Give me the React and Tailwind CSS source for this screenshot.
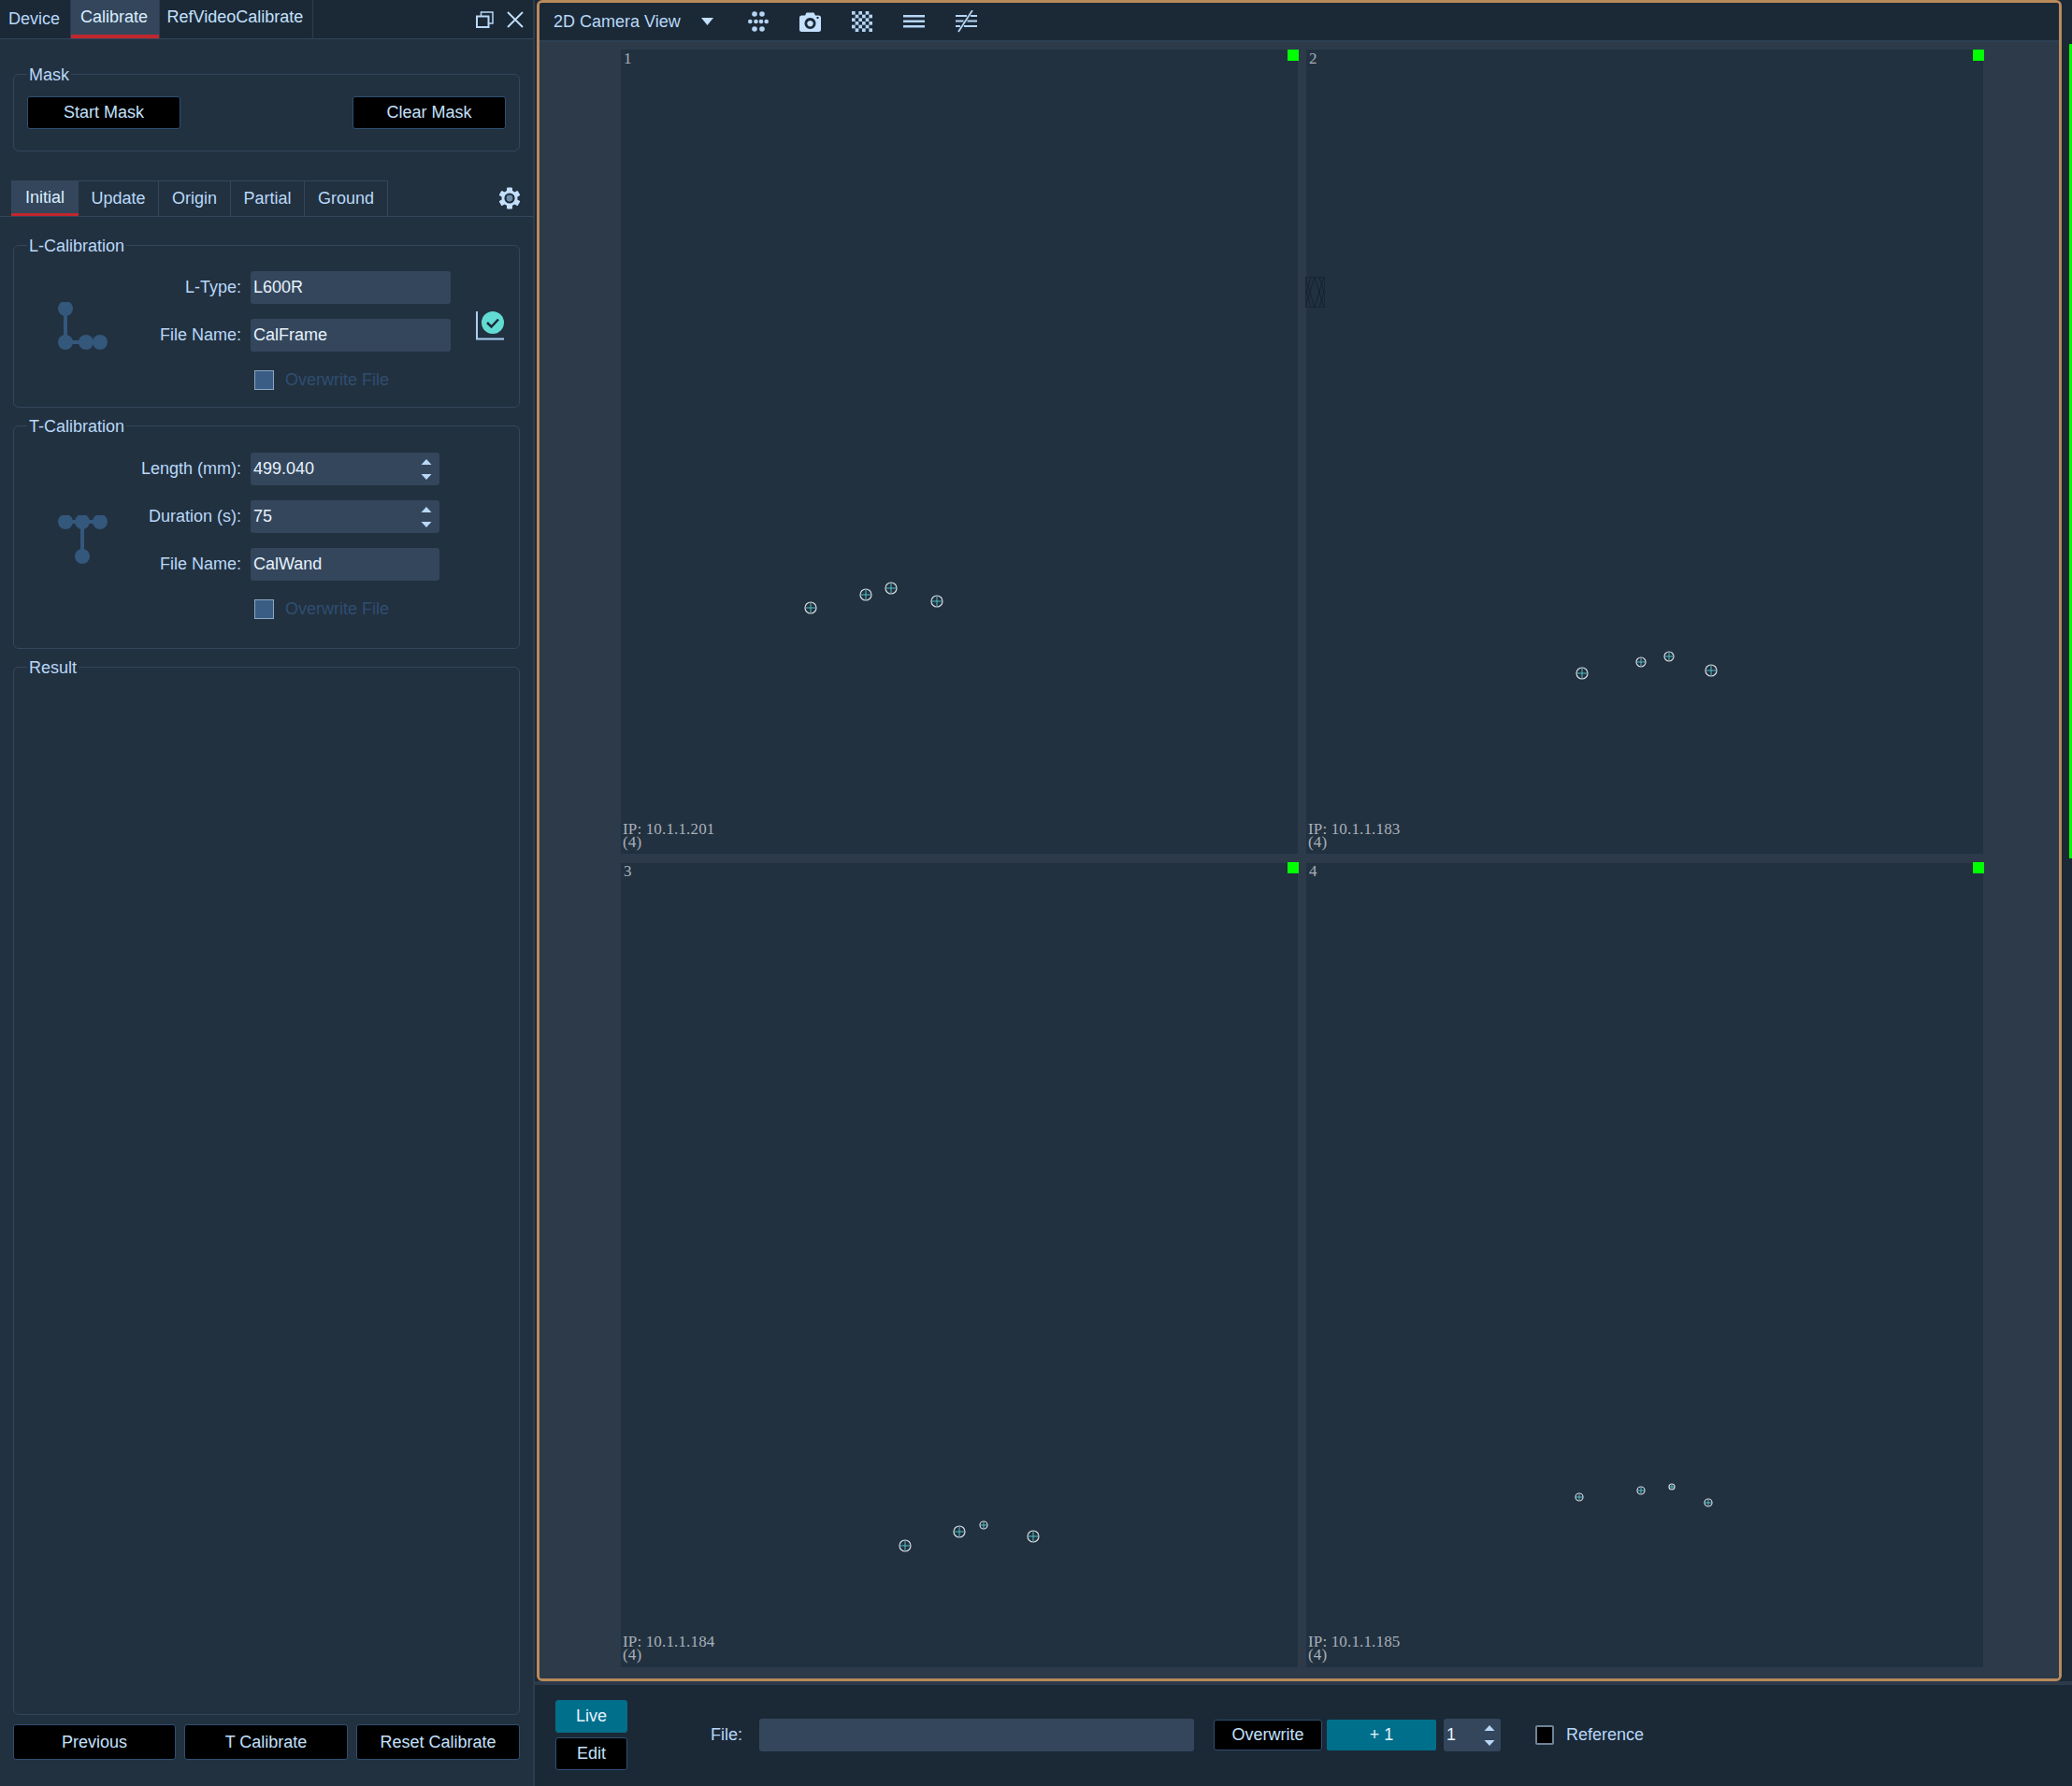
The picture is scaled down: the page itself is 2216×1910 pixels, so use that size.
import React from "react";

const FONT = { fontFamily: '"Liberation Sans", Arial, sans-serif' };

const cells = [
  { id: "1", ip: "10.1.1.201", marks: [[203, 597, 6], [262, 583, 6], [289, 576, 6], [338, 590, 6]] },
  { id: "2", ip: "10.1.1.183", marks: [[295, 667, 6], [358, 655, 5], [388, 649, 5], [433, 664, 6]] },
  { id: "3", ip: "10.1.1.184", marks: [[304, 730, 6], [362, 715, 6], [388, 708, 4], [441, 720, 6]] },
  { id: "4", ip: "10.1.1.185", marks: [[292, 678, 4], [358, 671, 4], [391, 667, 3], [430, 684, 4]] },
];

const Spinner = () => (
  <svg width="12" height="22" viewBox="0 0 12 22" className="text-[#b9d8f8]">
    <path d="M6 0L11.500 6H0.500Z" fill="currentColor" />
    <path d="M6 22L11.500 16H0.500Z" fill="currentColor" />
  </svg>
);

const Btn = ({ children, className }) => (
  <button className={`flex items-center justify-center bg-black border border-[#2f4f72] rounded-[3px] text-[18px] text-[#c4e0fc] ${className}`}>
    {children}
  </button>
);

const Group = ({ title, className, children }) => (
  <div className={`relative border border-[#33465a] rounded-[6px] ${className}`}>
    <span className="absolute left-[14px] top-[-11px] h-[22px] px-[2px] leading-[22px] bg-[#223140] text-[18px] text-[#b9d8f8]">
      {title}
    </span>
    {children}
  </div>
);

const Field = ({ label, value, width, spin }) => (
  <div className="flex items-center h-[35px]">
    <span className="w-[113px] text-right text-[18px] text-[#b9d8f8] whitespace-nowrap">{label}</span>
    <div className={`ml-[10px] h-[35px] ${width} flex items-center justify-between pl-[3px] pr-[8px] bg-[#34465b] rounded-[3px] text-[18px] text-[#e6f2fd]`}>
      {value}
      {spin && <Spinner />}
    </div>
  </div>
);

const Overwrite = ({ className }) => (
  <div className={`flex items-center h-[21px] ml-[127px] ${className}`}>
    <div className="w-[21px] h-[21px] bg-[#3a5d85] border border-[#8ba7c5]"></div>
    <span className="ml-[12px] text-[18px] text-[#2f4e70]">Overwrite File</span>
  </div>
);

const LIcon = () => (
  <svg width="53" height="52" viewBox="62 323 53 52" className="text-[#34577c]">
    <path d="M70 330V366H107" fill="none" stroke="currentColor" strokeWidth="4" />
    <circle cx="70" cy="330" r="8" fill="currentColor" />
    <circle cx="70" cy="366" r="8" fill="currentColor" />
    <circle cx="92" cy="366" r="8" fill="currentColor" />
    <circle cx="107" cy="366" r="8" fill="currentColor" />
  </svg>
);

const TIcon = () => (
  <svg width="53" height="52" viewBox="62 551 53 52" className="text-[#34577c]">
    <path d="M70 558H107M88 558V595" fill="none" stroke="currentColor" strokeWidth="4" />
    <circle cx="70" cy="558" r="8" fill="currentColor" />
    <circle cx="88" cy="558" r="8" fill="currentColor" />
    <circle cx="107" cy="558" r="8" fill="currentColor" />
    <circle cx="88" cy="595" r="8" fill="currentColor" />
  </svg>
);

const ChartCheck = () => (
  <svg width="31" height="31" viewBox="0 0 31 31">
    <path d="M1 0V29.500H30" fill="none" stroke="#a9d0f5" strokeWidth="2" />
    <circle cx="18" cy="12" r="12" fill="#62dcd3" />
    <path d="M12 12L16.500 16.500L24 8.500" fill="none" stroke="#1b2937" strokeWidth="2.500" />
  </svg>
);

const GearIcon = () => (
  <svg width="24" height="24" viewBox="0 0 24 24" className="ml-auto mt-[7px]">
    <g fill="#c4e0fc">
      <circle cx="12" cy="12" r="8.500" />
      {[0, 60, 120, 180, 240, 300].map((deg) => (
        <rect key={deg} x="9" y="0.500" width="6" height="5" rx="1" transform={`rotate(${deg} 12 12)`} />
      ))}
    </g>
    <circle cx="12" cy="12" r="4.500" fill="#6e8aa8" stroke="#1f2d3b" strokeWidth="2.200" />
  </svg>
);

const DotsIcon = () => (
  <svg width="22" height="22" viewBox="0 0 22 22" fill="#b5d5f5">
    <circle cx="7" cy="3" r="2.800" />
    <circle cx="15" cy="3" r="2.800" />
    <circle cx="2.300" cy="11" r="2.300" />
    <circle cx="8.500" cy="11" r="2.300" />
    <circle cx="14" cy="11" r="2.300" />
    <circle cx="19.700" cy="11" r="2.300" />
    <circle cx="7" cy="19" r="2.800" />
    <circle cx="15" cy="19" r="2.800" />
  </svg>
);

const CameraIcon = () => (
  <svg width="23" height="21" viewBox="0 0 23 21">
    <path
      fillRule="evenodd"
      fill="#c4e0fc"
      d="M2.500 3.500H6L7.500 0.500H15.500L17 3.500H20.500A2.500 2.500 0 0 1 23 6V18.500A2.500 2.500 0 0 1 20.500 21H2.500A2.500 2.500 0 0 1 0 18.500V6A2.500 2.500 0 0 1 2.500 3.500ZM11.500 6A6 6 0 1 0 11.510 6ZM11.500 9A3.200 3.200 0 1 1 11.490 9Z"
    />
    <rect x="18.500" y="5" width="2" height="2" fill="#1b2937" />
  </svg>
);

const CheckerIcon = () => {
  const squares = [];
  for (let r = 0; r < 6; r++) {
    for (let c = 0; c < 6; c++) {
      if ((r + c) % 2 === 0) squares.push(<rect key={`${r}-${c}`} x={c * 3.67} y={r * 3.67} width="3.67" height="3.67" />);
    }
  }
  return (
    <svg width="22" height="22" viewBox="0 0 22 22" fill="#b5d5f5">
      {squares}
    </svg>
  );
};

const LinesIcon = () => (
  <svg width="23" height="14" viewBox="0 0 23 14" fill="#b5d5f5">
    <rect y="0" width="23" height="2.500" />
    <rect y="5.500" width="23" height="2.500" />
    <rect y="11" width="23" height="2.500" />
  </svg>
);

const NotEqualIcon = () => (
  <svg width="23" height="24" viewBox="0 0 23 24" fill="none" stroke="#b5d5f5" strokeWidth="2">
    <path d="M0 6H12M16 6H23M0 11.500H8.500M12.500 11.500H23M0 17H5M9 17H23" />
    <path d="M18 0L3 23" strokeWidth="1.800" />
  </svg>
);

const Hatch = () => (
  <svg width="21" height="33" viewBox="0 0 21 33" className="absolute left-[-1px] top-[243px]">
    <rect width="21" height="33" fill="#223140" />
    <path d="M0 0L10 33M10 0L20 33M20 0L10 33M10 0L0 33M0 11L6 33M15 0L21 20M21 12L15 33M6 0L0 20" stroke="#121c26" strokeWidth="0.700" fill="none" />
    <rect x="0.500" y="0.500" width="20" height="32" fill="none" stroke="#1a2632" strokeWidth="1" />
  </svg>
);

const Cell = ({ cell, lower }) => (
  <div className="relative bg-[#223140] border-b border-[#2a3b4d]">
    <span
      className={`absolute left-[3px] text-[17px] leading-[16px] text-[#a8b0b8] ${lower ? "top-[1px]" : "top-[2px]"}`}
      style={{ fontFamily: '"Liberation Serif", serif' }}
    >
      {cell.id}
    </span>
    <div className={`absolute right-[-1px] w-[12px] h-[12px] bg-[#00ff00] ${lower ? "top-[-1px]" : "top-0"}`}></div>
    {cell.id === "2" && <Hatch />}
    <svg width="724" height="860" viewBox="0 0 724 860" className="absolute left-0 top-0">
      {cell.marks.map(([x, y, r]) => (
        <g key={`${x}-${y}`}>
          <path d={`M${x - r + 1} ${y}H${x + r - 1}M${x} ${y - r + 1}V${y + r - 1}`} stroke="#4fc0c4" strokeWidth="1" />
          <circle cx={x} cy={y} r={r} fill="none" stroke="#d5dde2" strokeWidth="1.200" />
        </g>
      ))}
    </svg>
    <div
      className={`absolute left-[2px] text-[17px] leading-[14px] tracking-[0.15px] text-[#a8b0b8] ${lower ? "bottom-[6px]" : "bottom-[5px]"}`}
      style={{ fontFamily: '"Liberation Serif", serif' }}
    >
      <div>IP: {cell.ip}</div>
      <div>(4)</div>
    </div>
  </div>
);

export default function App() {
  return (
    <div className="flex w-[2216px] h-[1910px] overflow-hidden bg-[#1b2937]" style={FONT}>
      {/* Left panel */}
      <aside className="flex flex-col w-[572px] h-full bg-[#223140] border-r-2 border-[#2e3c4c]">
        <div className="flex items-stretch h-[42px] bg-[#1b2937] border-b border-[#33465a] text-[18px] text-[#b9d8f8]">
          <div className="w-[76px] pl-[9px] flex items-center border-r border-[#2b3c4e]">Device</div>
          <div className="w-[94px] flex items-center justify-center pr-[2px] bg-[#34465b] border-b-[4px] border-[#c0272d] text-[#dbeeff]">Calibrate</div>
          <div className="w-[165px] flex items-center justify-center pb-[5px] pr-[2px] border-x border-[#2b3c4e] text-[#c4e0fc]">RefVideoCalibrate</div>
          <div className="flex items-center gap-[14px] ml-auto pr-[10px]">
            <svg width="19" height="18" viewBox="0 0 19 18" fill="none" stroke="#b9d8f8">
              <rect x="1" y="5.500" width="12.500" height="11.500" strokeWidth="2" />
              <path d="M5.500 5V1H18V13H14" strokeWidth="1.500" />
            </svg>
            <svg width="18" height="18" viewBox="0 0 18 18" fill="none" stroke="#c4e0fc" strokeWidth="1.800">
              <path d="M1 1L17 17M17 1L1 17" />
            </svg>
          </div>
        </div>

        <div className="px-[14px] pt-[37px]">
          <Group title="Mask" className="h-[83px] flex items-start justify-between px-[14px] pt-[23px]">
            <Btn className="w-[164px] h-[35px]">Start Mask</Btn>
            <Btn className="w-[164px] h-[35px]">Clear Mask</Btn>
          </Group>
        </div>

        <div className="flex items-stretch h-[39px] mt-[31px] pl-[12px] pr-[13px] border-b border-[#33465a] text-[18px] text-[#b9d8f8]">
          <div className="flex items-stretch border-t border-r border-[#33465a]">
            <div className="w-[72px] flex items-center justify-center bg-[#34465b] border-b-[3px] border-[#c0272d] text-[#dbeeff]">Initial</div>
            <div className="w-[86px] flex items-center justify-center border-r border-[#33465a]">Update</div>
            <div className="w-[77px] flex items-center justify-center border-r border-[#33465a]">Origin</div>
            <div className="w-[79px] flex items-center justify-center border-r border-[#33465a]">Partial</div>
            <div className="w-[88px] flex items-center justify-center">Ground</div>
          </div>
          <GearIcon />
        </div>

        <div className="flex flex-col flex-1 px-[14px] pt-[30px]">
          <Group title="L-Calibration" className="flex h-[174px]">
            <div className="w-[130px] pl-[47px] pt-[60px]">
              <LIcon />
            </div>
            <div className="flex flex-col pt-[27px] gap-[16px]">
              <Field label="L-Type:" value="L600R" width="w-[214px]" />
              <Field label="File Name:" value="CalFrame" width="w-[214px]" />
              <Overwrite className="mt-[4px]" />
            </div>
            <div className="ml-[27px] pt-[70px]">
              <ChartCheck />
            </div>
          </Group>

          <Group title="T-Calibration" className="flex h-[239px] mt-[19px]">
            <div className="w-[130px] pl-[47px] pt-[95px]">
              <TIcon />
            </div>
            <div className="flex flex-col pt-[28px] gap-[16px]">
              <Field label="Length (mm):" value="499.040" width="w-[202px]" spin />
              <Field label="Duration (s):" value="75" width="w-[202px]" spin />
              <Field label="File Name:" value="CalWand" width="w-[202px]" />
              <Overwrite className="mt-[4px]" />
            </div>
          </Group>

          <Group title="Result" className="flex-1 mt-[19px]" />

          <div className="flex gap-[9px] mt-[10px] mb-[28px]">
            <Btn className="w-[174px] h-[38px]">Previous</Btn>
            <Btn className="w-[175px] h-[38px]">T Calibrate</Btn>
            <Btn className="w-[175px] h-[38px]">Reset Calibrate</Btn>
          </div>
        </div>
      </aside>

      {/* Right side */}
      <main className="flex flex-col flex-1 min-w-0">
        <div className="flex h-[1798px]">
          <div className="flex flex-col w-[1631px] ml-[2px] border-[3px] border-[#b98a5b] rounded-[6px] overflow-hidden">
            <div className="flex items-center h-[42px] shrink-0 pl-[15px] bg-[#1b2937] border-b-2 border-[#2e4055]">
              <span className="text-[18px] text-[#b9d8f8]">2D Camera View</span>
              <svg width="13" height="8" viewBox="0 0 13 8" className="ml-[22px]">
                <path d="M0 0H13L6.500 8Z" fill="#c4e0fc" />
              </svg>
              <div className="ml-[37px]"><DotsIcon /></div>
              <div className="ml-[33px]"><CameraIcon /></div>
              <div className="ml-[33px]"><CheckerIcon /></div>
              <div className="ml-[33px]"><LinesIcon /></div>
              <div className="ml-[33px]"><NotEqualIcon /></div>
            </div>
            <div className="flex-1 min-h-0 grid grid-cols-2 grid-rows-2 gap-[9px] pl-[87px] pr-[81px] pt-[8px] pb-[11px] bg-[#2d3a4a]">
              {cells.map((cell) => (
                <Cell key={cell.id} cell={cell} lower={cell.id === "3" || cell.id === "4"} />
              ))}
            </div>
          </div>
          <div className="flex-1 flex justify-end">
            <div className="w-[3px] h-[871px] mt-[47px] bg-[#00ff00]"></div>
          </div>
        </div>

        {/* Bottom bar */}
        <div className="flex items-center flex-1 pl-[22px] pb-[1px] border-t-4 border-[#2d3a4a] text-[18px] text-[#b9d8f8]">
          <div className="flex flex-col gap-[5px] w-[77px]">
            <button className="h-[35px] bg-[#006f8c] border border-[#0b6c88] rounded-[3px] text-[18px] text-[#e4f3ff]">Live</button>
            <Btn className="h-[35px]">Edit</Btn>
          </div>
          <span className="ml-[89px]">File:</span>
          <div className="ml-[18px] w-[465px] h-[35px] bg-[#34465b] rounded-[3px]"></div>
          <Btn className="ml-[21px] w-[116px] h-[33px]">Overwrite</Btn>
          <button className="ml-[5px] w-[117px] h-[33px] bg-[#006f8c] rounded-[2px] text-[18px] text-[#e4f3ff]">+ 1</button>
          <div className="ml-[8px] w-[61px] h-[35px] flex items-center justify-between pl-[3px] pr-[6px] bg-[#34465b] rounded-[3px] text-[#e6f2fd]">
            1
            <Spinner />
          </div>
          <div className="ml-[37px] w-[20px] h-[21px] bg-black border-2 border-[#6f8296] rounded-[2px]"></div>
          <span className="ml-[13px]">Reference</span>
        </div>
      </main>
    </div>
  );
}
